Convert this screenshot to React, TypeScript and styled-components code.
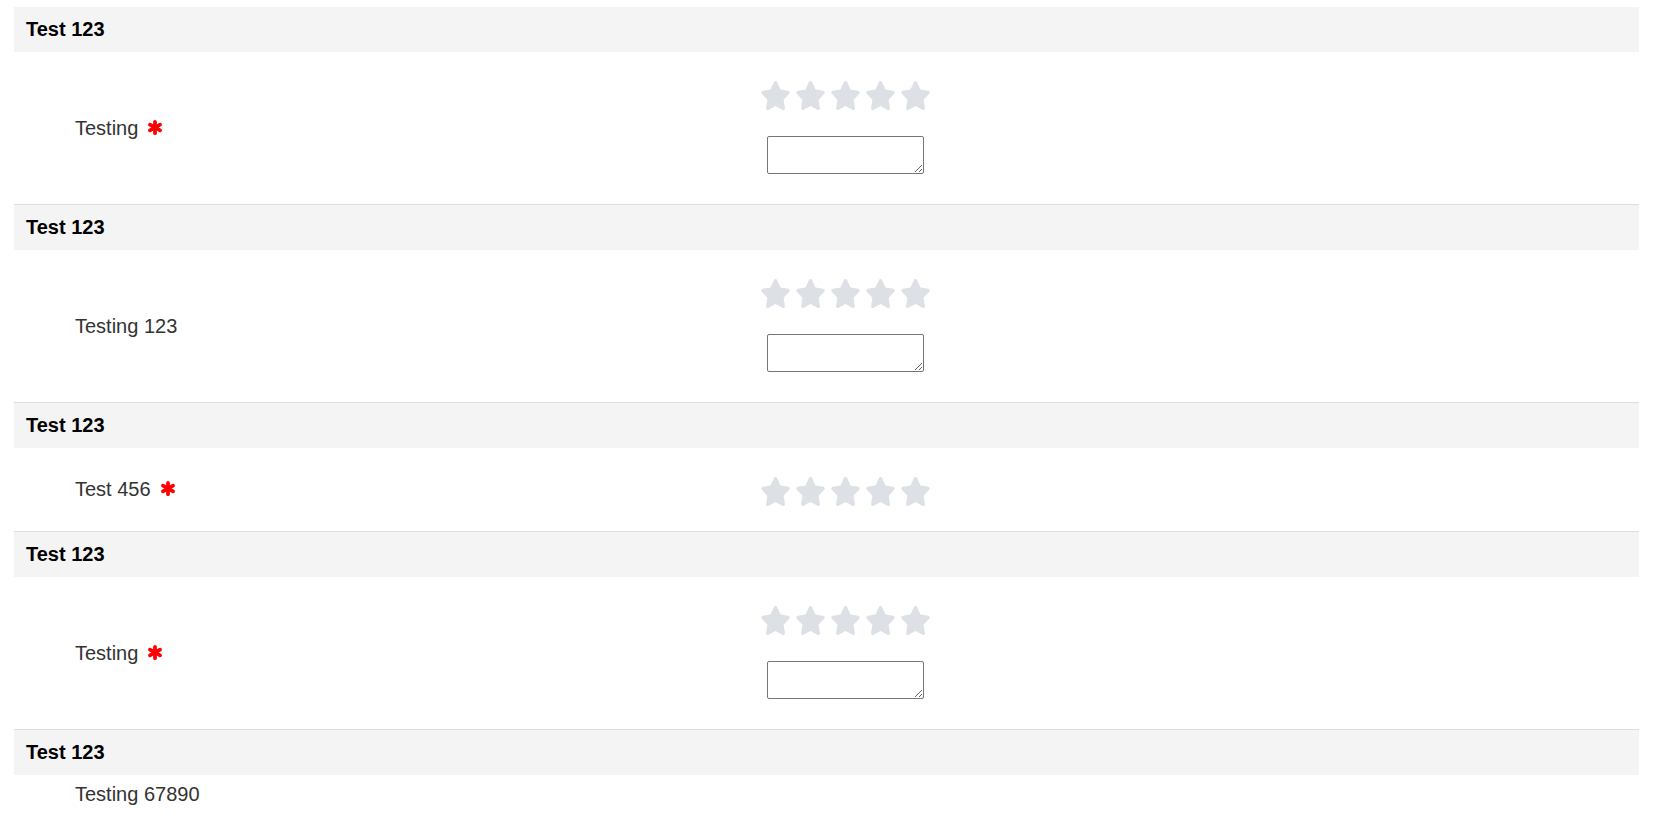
import React from "react";
import styled, { createGlobalStyle } from "styled-components";

const GlobalStyle = createGlobalStyle`
  body {
    margin: 0;
    background: #ffffff;
    font-family: "Liberation Sans", Arial, sans-serif;
  }
`;

const Page = styled.div`
  padding: 7px 30px 0 14px;
`;

const SectionHeader = styled.div`
  height: 45px;
  line-height: 45px;
  padding-left: 12px;
  background: #f4f4f4;
  font-size: 20px;
  font-weight: bold;
  color: #000;
`;

const SectionBody = styled.div<{ $last?: boolean }>`
  display: grid;
  grid-template-columns: 731px 200px 1fr;
  align-items: center;
  border-bottom: ${(p) => (p.$last ? "none" : "1px solid #dedede")};
`;

const LabelCell = styled.div<{ $compact?: boolean }>`
  display: flex;
  align-items: center;
  gap: 9px;
  padding: ${(p) => (p.$compact ? "8px 0 0 61px" : "0 0 0 61px")};
  font-size: 20px;
  line-height: 23px;
  color: #333;
`;

const Required = styled.svg`
  width: 16px;
  height: 15px;
  margin-top: -2px;
`;

const RatingCell = styled.div<{ $withComment?: boolean }>`
  display: flex;
  flex-direction: column;
  align-items: center;
  padding: ${(p) => (p.$withComment ? "29px 0 30px" : "29px 0 25px")};
`;

const Stars = styled.div`
  display: flex;
  gap: 4px;
  height: 29px;
`;

const Star = styled.svg`
  width: 31px;
  height: 29px;
  fill: #dde0e5;
`;

const Comment = styled.textarea`
  display: block;
  box-sizing: border-box;
  width: 157px;
  height: 38px;
  margin-top: 26px;
  border: 1px solid #767676;
  border-radius: 2px;
  font-family: "Liberation Sans", Arial, sans-serif;
`;

type Section = {
  title: string;
  label: string;
  required: boolean;
  rating: boolean;
  comment: boolean;
};

const sections: Section[] = [
  { title: "Test 123", label: "Testing", required: true, rating: true, comment: true },
  { title: "Test 123", label: "Testing 123", required: false, rating: true, comment: true },
  { title: "Test 123", label: "Test 456", required: true, rating: true, comment: false },
  { title: "Test 123", label: "Testing", required: true, rating: true, comment: true },
  { title: "Test 123", label: "Testing 67890", required: false, rating: false, comment: false },
];

const starPath =
  "M316.9 18C311.6 7 300.4 0 288.1 0s-23.4 7-28.8 18L195 150.3 51.4 171.5c-12 1.8-22 10.2-25.7 21.7s-.7 24.2 7.9 32.7L137.8 329 113.2 474.7c-2 12 3 24.2 12.9 31.3s23 8 33.8 2.3l128.3-68.5 128.3 68.5c10.8 5.7 23.9 4.9 33.8-2.3s14.9-19.3 12.9-31.3L438.5 329 542.7 225.9c8.6-8.5 11.7-21.2 7.9-32.7s-13.7-19.9-25.7-21.7L381.2 150.3 316.9 18z";

const Asterisk = () => (
  <Required viewBox="0 0 16 16">
    <g stroke="#ff0000" strokeWidth="4" strokeLinecap="round">
      <line x1="8" y1="2" x2="8" y2="14" />
      <line x1="2.6" y1="5" x2="13.4" y2="11" />
      <line x1="2.6" y1="11" x2="13.4" y2="5" />
    </g>
  </Required>
);

const App = () => {
  return (
    <Page>
      <GlobalStyle />
      {sections.map((s, i) => (
        <div key={i}>
          <SectionHeader>{s.title}</SectionHeader>
          <SectionBody $last={i === sections.length - 1}>
            <LabelCell $compact={!s.rating}>
              {s.label}
              {s.required && <Asterisk />}
            </LabelCell>
            {s.rating && (
              <RatingCell $withComment={s.comment}>
                <Stars>
                  {[1, 2, 3, 4, 5].map((n) => (
                    <Star key={n} viewBox="0 0 576 512" preserveAspectRatio="none">
                      <path d={starPath} />
                    </Star>
                  ))}
                </Stars>
                {s.comment && <Comment />}
              </RatingCell>
            )}
          </SectionBody>
        </div>
      ))}
    </Page>
  );
};

export default App;
